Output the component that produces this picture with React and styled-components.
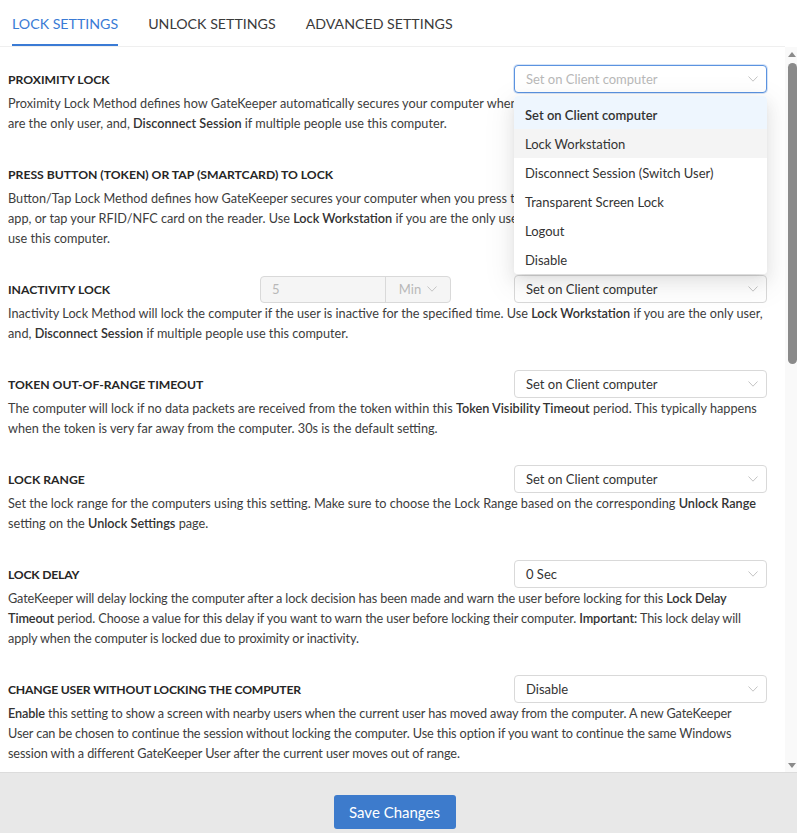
import styled, { createGlobalStyle, css } from "styled-components";

/* ================================
   Global
   ================================ */

const GlobalStyle = createGlobalStyle`
  html, body {
    margin: 0;
    padding: 0;
    height: 100%;
    background: #ffffff;
    font-family: "Segoe UI", Lato, "Open Sans", sans-serif;
    color: #333333;
  }
  #root {
    height: 100%;
  }
  * {
    box-sizing: border-box;
  }
`;

/* ================================
   Styled Components
   ================================ */

const Page = styled.div`
  height: 100vh;
  display: flex;
  flex-direction: column;
`;

const TabBar = styled.div`
  height: 47px;
  flex: none;
  display: flex;
  gap: 30px;
  padding-left: 12px;
  margin-right: 12px;
  border-bottom: 1px solid #efefef;
`;

const Tab = styled.div`
  height: 46px;
  display: flex;
  align-items: center;
  font-size: 14.2px;
  color: ${(p) => (p.$active ? "#3a7bd5" : "#3a3a3a")};
  border-bottom: 2px solid ${(p) => (p.$active ? "#3a7bd5" : "transparent")};
  padding-top: 2px;
  margin-bottom: -1px;
`;

const ScrollArea = styled.div`
  flex: 1;
  min-height: 0;
  display: flex;
`;

const Viewport = styled.div`
  flex: 1;
  overflow: hidden;
  background: #ffffff;
`;

const ScrollTrack = styled.div`
  width: 12px;
  flex: none;
  background: #f9f9f9;
  display: flex;
  flex-direction: column;
  align-items: center;
  padding: 5px 0 4px 2px;
`;

const Arrow = styled.div`
  width: 0;
  height: 0;
  border-left: 4px solid transparent;
  border-right: 4px solid transparent;
  ${(p) =>
    p.$down
      ? css`
          border-top: 5px solid #8a8a8a;
          margin-top: auto;
        `
      : css`
          border-bottom: 5px solid #8a8a8a;
        `}
`;

const Thumb = styled.div`
  width: 9px;
  height: 301px;
  margin-top: 6px;
  border-radius: 5px;
  background: #8a8a8a;
`;

const Content = styled.div`
  padding: 18px 18px 0 8px;
`;

const Section = styled.div`
  margin-bottom: 27px;
`;

const Row = styled.div`
  height: 28px;
  display: flex;
  align-items: center;
  justify-content: space-between;
  position: relative;
  z-index: ${(p) => (p.$raised ? 10 : 1)};
`;

const Title = styled.div`
  flex: 1;
  font-size: 12.2px;
  font-weight: 700;
  color: #262626;
  text-transform: uppercase;
  white-space: nowrap;
  ${(p) =>
    p.$tight &&
    css`
      letter-spacing: -0.2px;
    `}
`;

const Controls = styled.div`
  display: flex;
  align-items: center;
  gap: 63px;
`;

const Desc = styled.div`
  position: relative;
  z-index: 0;
  font-size: 12.7px;
  line-height: 20px;
  color: #3d3d3d;
  white-space: nowrap;
  ${(p) =>
    p.$tight &&
    css`
      letter-spacing: -0.12px;
    `}

  b {
    font-weight: 600;
    color: #333;
  }
`;

const SelectWrap = styled.div`
  position: relative;
  width: 253px;
`;

const SelectBox = styled.div`
  height: 28px;
  display: flex;
  align-items: center;
  justify-content: space-between;
  padding: 0 8px 0 11px;
  border: 1px solid ${(p) => (p.$focused ? "#5b93e0" : "#d9d9d9")};
  box-shadow: ${(p) => (p.$focused ? "0 0 0 1px rgba(91,147,224,0.25)" : "none")};
  border-radius: 4px;
  background: #fff;
  font-size: 13px;
  color: ${(p) => (p.$placeholder ? "#b8b8b8" : "#333333")};
`;

const Menu = styled.div`
  position: absolute;
  top: 31px;
  left: 0;
  width: 100%;
  z-index: 20;
  background: #fff;
  border-radius: 4px;
  box-shadow: 0 3px 6px -4px rgba(0, 0, 0, 0.12), 0 6px 16px 0 rgba(0, 0, 0, 0.08),
    0 9px 28px 8px rgba(0, 0, 0, 0.05);
  overflow: hidden;
`;

const Option = styled.div`
  height: 29px;
  display: flex;
  align-items: center;
  padding: 0 11px;
  font-size: 13px;
  color: #333;
  font-weight: ${(p) => (p.$selected ? 600 : 400)};
  background: ${(p) => (p.$selected ? "#eef6fe" : p.$hover ? "#f4f4f4" : "#fff")};

  &:first-child {
    height: 33px;
    padding-top: 4px;
  }
`;

const InputGroup = styled.div`
  display: flex;
  height: 27px;
  width: 191px;
  border: 1px solid #d9d9d9;
  border-radius: 4px;
  background: #f5f5f5;
  font-size: 13px;
  color: #b8b8b8;
`;

const NumberField = styled.div`
  flex: 1;
  display: flex;
  align-items: center;
  padding: 0 11px;
  border-right: 1px solid #d9d9d9;
`;

const Addon = styled.div`
  width: 64px;
  display: flex;
  align-items: center;
  justify-content: center;
  gap: 6px;
`;

const Footer = styled.div`
  height: 61px;
  flex: none;
  background: #e8e8e8;
  border-top: 1px solid #dcdcdc;
  display: flex;
  justify-content: center;
  padding: 22px 8px 0 0;
`;

const SaveButton = styled.button`
  width: 122px;
  height: 34px;
  border: none;
  border-radius: 3px;
  background: #3d7bcc;
  color: #fff;
  font-family: inherit;
  font-size: 15px;
  cursor: pointer;
`;

/* ================================
   Render Components
   ================================ */

function Chevron({ color = "#c4c4c4" }) {
  return (
    <svg width="10" height="6" viewBox="0 0 10 6">
      <polyline points="0.5,0.5 5,5.2 9.5,0.5" fill="none" stroke={color} strokeWidth="1" />
    </svg>
  );
}

function Select({ value, placeholder, focused, children }) {
  return (
    <SelectWrap>
      <SelectBox $focused={focused} $placeholder={placeholder}>
        <span>{value}</span>
        <Chevron />
      </SelectBox>
      {children}
    </SelectWrap>
  );
}

const options = [
  "Set on Client computer",
  "Lock Workstation",
  "Disconnect Session (Switch User)",
  "Transparent Screen Lock",
  "Logout",
  "Disable",
];

export default function App() {
  return (
    <Page>
      <GlobalStyle />
      <TabBar>
        <Tab $active>LOCK SETTINGS</Tab>
        <Tab>UNLOCK SETTINGS</Tab>
        <Tab>ADVANCED SETTINGS</Tab>
      </TabBar>

      <ScrollArea>
        <Viewport>
          <Content>
            <Section>
              <Row $raised>
                <Title>Proximity Lock</Title>
                <Select value="Set on Client computer" placeholder focused>
                  <Menu>
                    {options.map((o, i) => (
                      <Option key={o} $selected={i === 0} $hover={i === 1}>
                        {o}
                      </Option>
                    ))}
                  </Menu>
                </Select>
              </Row>
              <Desc>
                Proximity Lock Method defines how GateKeeper automatically secures your computer when you walk away. Use <b>Lock Workstation</b> if you
                <br />
                are the only user, and, <b>Disconnect Session</b> if multiple people use this computer.
              </Desc>
            </Section>

            <Section>
              <Row>
                <Title>Press Button (Token) or Tap (Smartcard) to Lock</Title>
                <Select value="Set on Client computer" />
              </Row>
              <Desc>
                Button/Tap Lock Method defines how GateKeeper secures your computer when you press the button on your token, click lock in the
                <br />
                app, or tap your RFID/NFC card on the reader. Use <b>Lock Workstation</b> if you are the only user, and, <b>Disconnect Session</b> if multiple people
                <br />
                use this computer.
              </Desc>
            </Section>

            <Section>
              <Row>
                <Title>Inactivity Lock</Title>
                <Controls>
                  <InputGroup>
                    <NumberField>5</NumberField>
                    <Addon>
                      Min <Chevron />
                    </Addon>
                  </InputGroup>
                  <Select value="Set on Client computer" />
                </Controls>
              </Row>
              <Desc>
                Inactivity Lock Method will lock the computer if the user is inactive for the specified time. Use <b>Lock Workstation</b> if you are the only user,
                <br />
                and, <b>Disconnect Session</b> if multiple people use this computer.
              </Desc>
            </Section>

            <Section>
              <Row>
                <Title>Token Out-of-Range Timeout</Title>
                <Select value="Set on Client computer" />
              </Row>
              <Desc>
                The computer will lock if no data packets are received from the token within this <b>Token Visibility Timeout</b> period. This typically happens
                <br />
                when the token is very far away from the computer. 30s is the default setting.
              </Desc>
            </Section>

            <Section>
              <Row>
                <Title>Lock Range</Title>
                <Select value="Set on Client computer" />
              </Row>
              <Desc>
                Set the lock range for the computers using this setting. Make sure to choose the Lock Range based on the corresponding <b>Unlock Range</b>
                <br />
                setting on the <b>Unlock Settings</b> page.
              </Desc>
            </Section>

            <Section>
              <Row>
                <Title $tight>Lock Delay</Title>
                <Select value="0 Sec" />
              </Row>
              <Desc $tight>
                GateKeeper will delay locking the computer after a lock decision has been made and warn the user before locking for this <b>Lock Delay</b>
                <br />
                <b>Timeout</b> period. Choose a value for this delay if you want to warn the user before locking their computer. <b>Important:</b> This lock delay will
                <br />
                apply when the computer is locked due to proximity or inactivity.
              </Desc>
            </Section>

            <Section>
              <Row>
                <Title $tight>Change User Without Locking the Computer</Title>
                <Select value="Disable" />
              </Row>
              <Desc $tight>
                <b>Enable</b> this setting to show a screen with nearby users when the current user has moved away from the computer. A new GateKeeper
                <br />
                User can be chosen to continue the session without locking the computer. Use this option if you want to continue the same Windows
                <br />
                session with a different GateKeeper User after the current user moves out of range.
              </Desc>
            </Section>
          </Content>
        </Viewport>
        <ScrollTrack>
          <Arrow />
          <Thumb />
          <Arrow $down />
        </ScrollTrack>
      </ScrollArea>

      <Footer>
        <SaveButton>Save Changes</SaveButton>
      </Footer>
    </Page>
  );
}
